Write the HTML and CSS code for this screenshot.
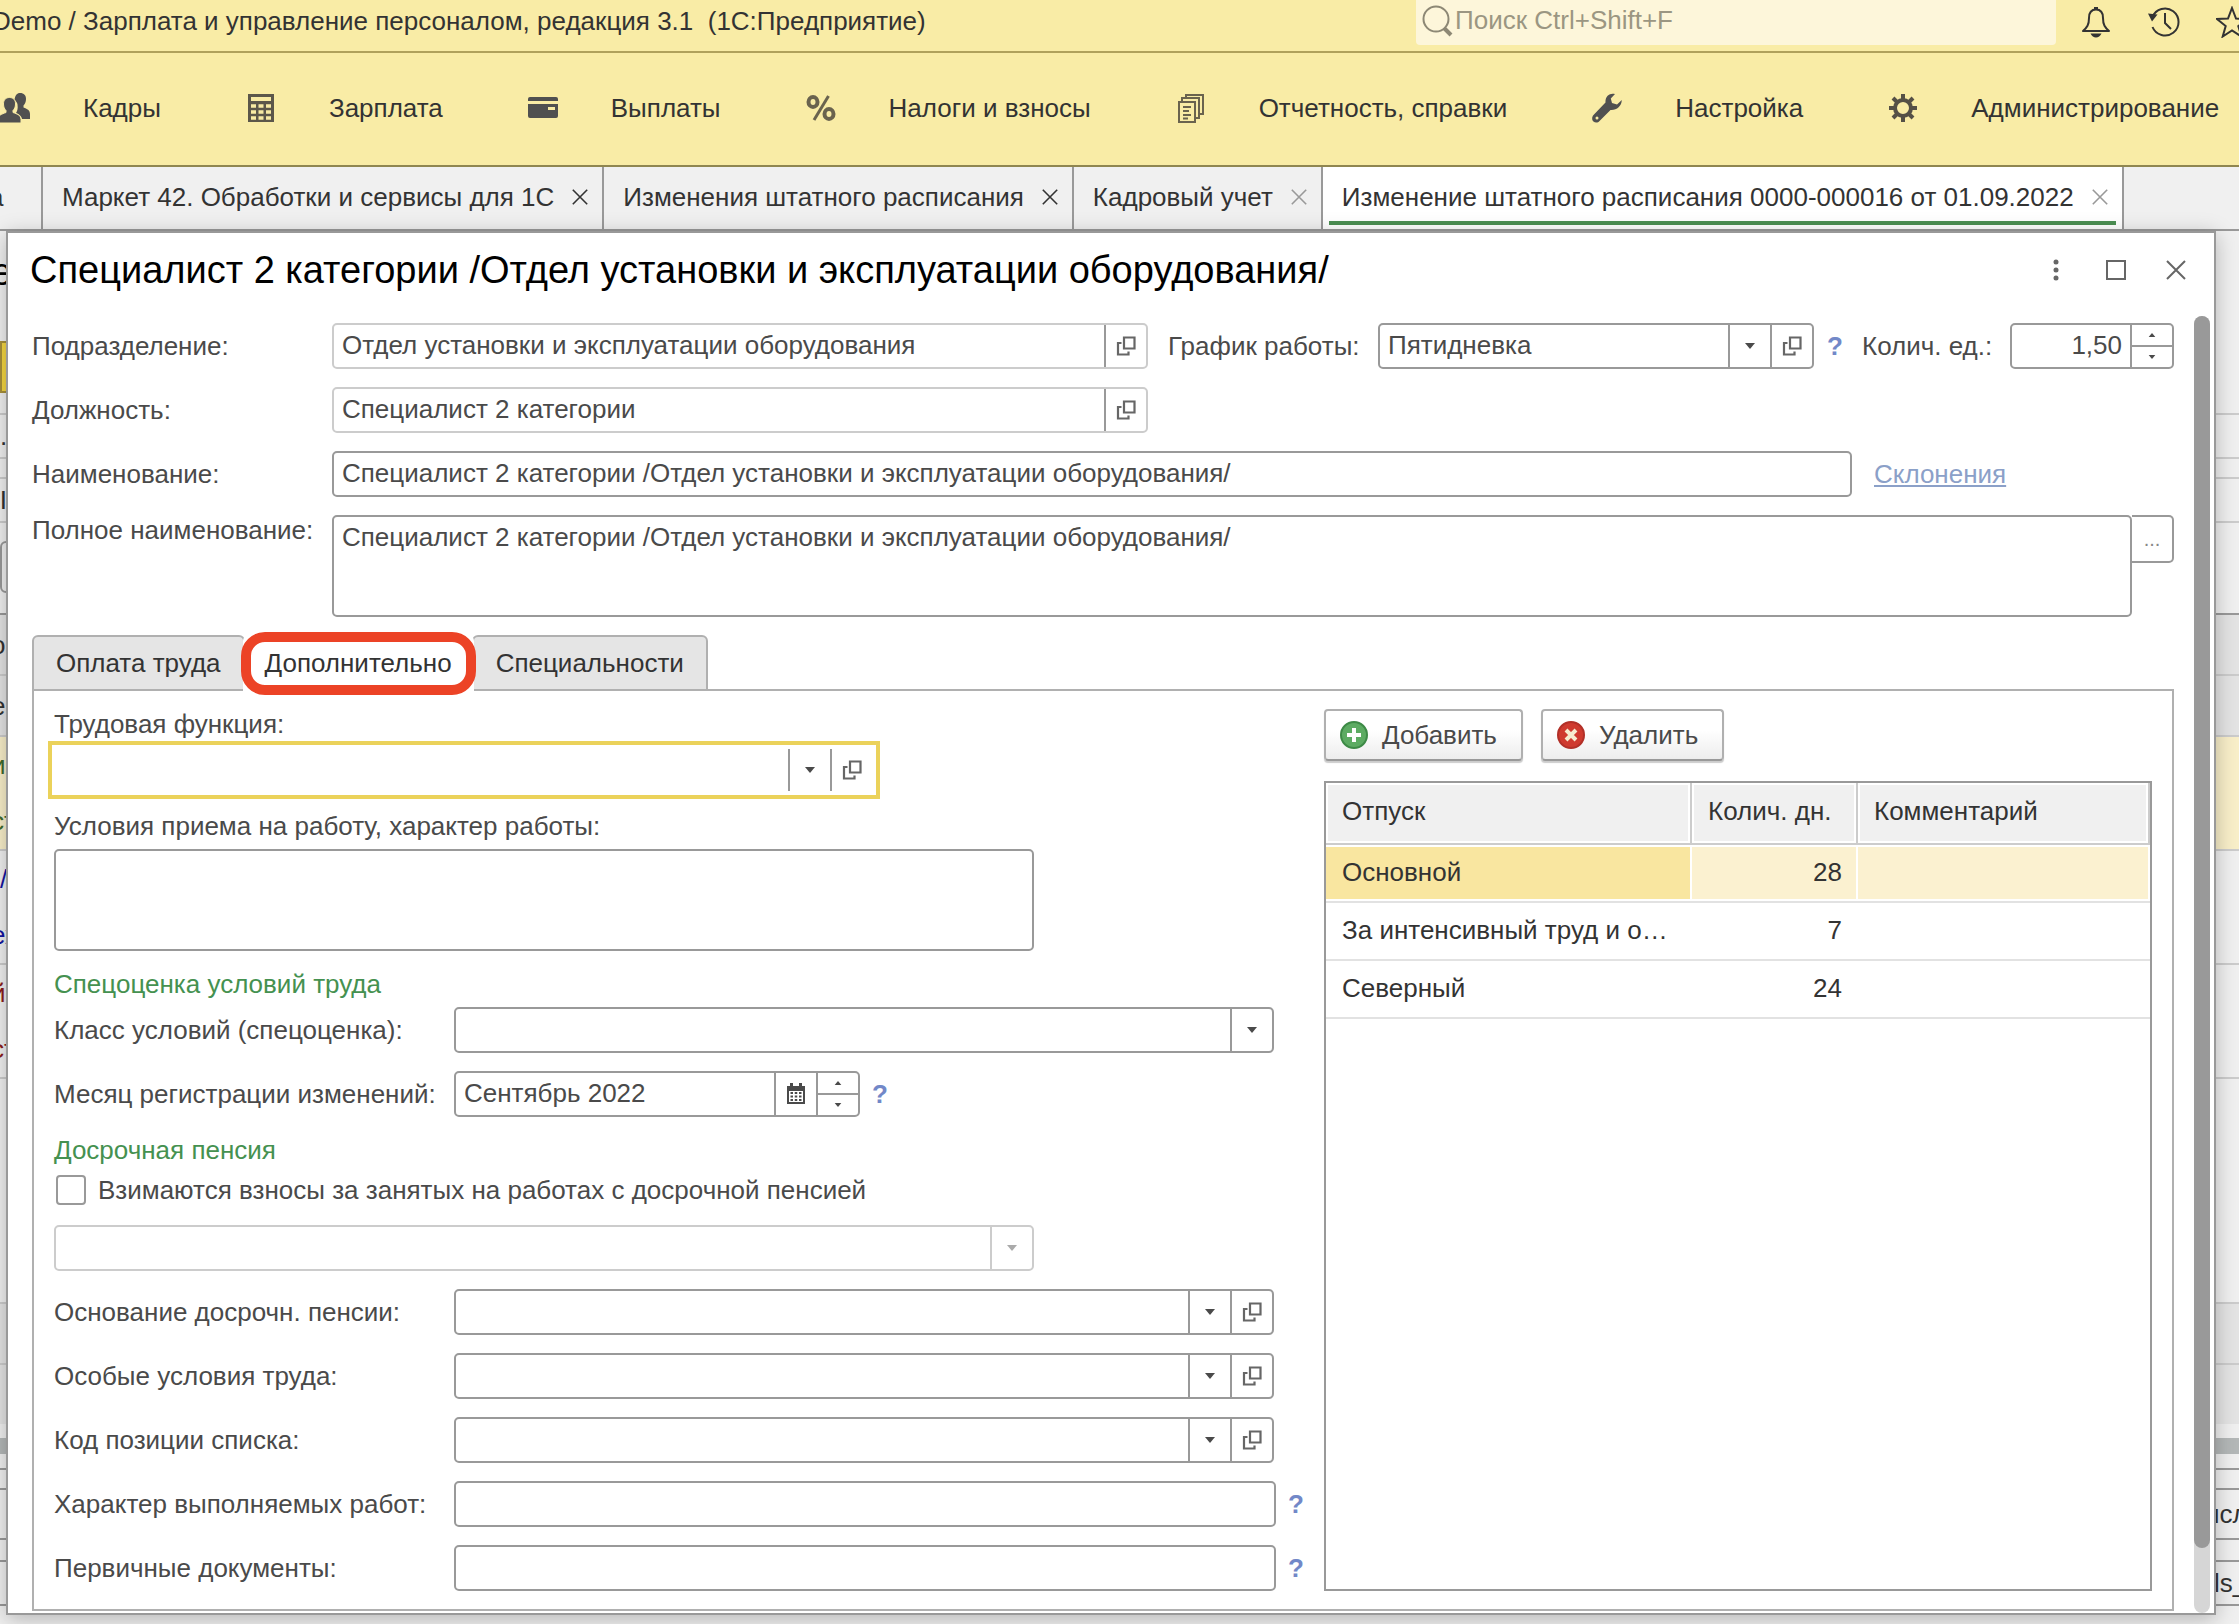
FILE: index.html
```html
<!DOCTYPE html>
<html lang="ru">
<head>
  <meta charset="UTF-8">
  <meta name="viewport" content="width=device-width, initial-scale=1.0">
  <title>Зарплата и управление персоналом</title>
  <link rel="stylesheet" href="styles.css">
</head>
<body>
  <svg class="sprite" aria-hidden="true">
    <symbol id="i-open" viewBox="0 0 20 20">
      <path d="M8 1.5h10.500v11h-10.500z M5.500 7h-3.500v11.500h10.500v-3" fill="none" stroke="currentColor" stroke-width="2.200"/>
    </symbol>
    <symbol id="i-down" viewBox="0 0 12 8"><path d="M1 1h10l-5 6z" fill="currentColor"/></symbol>
    <symbol id="i-up" viewBox="0 0 12 8"><path d="M1 7h10l-5-6z" fill="currentColor"/></symbol>
    <symbol id="i-close" viewBox="0 0 20 20"><path d="M1 1l18 18M19 1L1 19" fill="none" stroke="currentColor" stroke-width="2"/></symbol>
    <symbol id="i-calendar" viewBox="0 0 20 22">
      <path d="M1 3h18v18h-18z" fill="currentColor"/>
      <path d="M4 0h3v4h-3zM13 0h3v4h-3z" fill="currentColor"/>
      <path d="M3 8h14v11h-14z" fill="#fff"/>
      <path d="M4.500 10h11M4.500 13.500h11M4.500 17h11" stroke="currentColor" stroke-width="2" stroke-dasharray="2.500 1.750"/>
    </symbol>
  </svg>

  <header class="topbar">
    <div class="app-title">Demo / Зарплата и управление персоналом, редакция 3.1&nbsp; (1С:Предприятие)</div>
    <label class="search">
      <svg width="32" height="32" viewBox="0 0 32 32"><circle cx="14" cy="14" r="12.500" fill="none" stroke="#8d8875" stroke-width="2"/><path d="M22 23l7 7" stroke="#8d8875" stroke-width="4"/></svg>
      <input type="search" placeholder="Поиск Ctrl+Shift+F" aria-label="Поиск">
    </label>
    <div class="top-actions">
      <button type="button" aria-label="Уведомления">
        <svg width="32" height="32" viewBox="0 0 32 32"><path d="M16 3.500c-5 0-7 4-7 8.500 0 7-2 9.500-6 13h26c-4-3.500-6-6-6-13 0-4.500-2-8.500-7-8.500z" fill="none" stroke="#333" stroke-width="2" stroke-linejoin="round"/><path d="M14 1h4v3h-4zM10.500 27.500h11q-2 4-5.500 4t-5.500-4z" fill="#333"/></svg>
      </button>
      <button type="button" aria-label="История">
        <svg width="32" height="32" viewBox="0 0 32 32"><path d="M4.500 11a13.500 13.500 0 1 1 0 10" fill="none" stroke="#333" stroke-width="2"/><path d="M0 7.500l9.500 1-5.500 7z" fill="#333"/><path d="M17 7v10l6 6" fill="none" stroke="#333" stroke-width="2"/></svg>
      </button>
      <button type="button" aria-label="Избранное">
        <svg width="32" height="32" viewBox="0 0 32 32"><path d="M16 2l4 10.500 11 .5-8.700 7 3 10.500-9.300-6-9.300 6 3-10.500-8.700-7 11-.5z" fill="none" stroke="#333" stroke-width="2"/></svg>
      </button>
    </div>
  </header>

  <nav class="sections">
    <a href="#">
      <svg viewBox="0 0 30 30" fill="#505050"><path d="M20 0c4 0 6 2.500 6 6 0 3-1 5-2.500 6.500v2c3.500 1.500 6.500 2.500 6.500 6.500v5h-8c-.5-3-3-5-6-6 1.500-2.500 2-4.500 1.500-8.500-.3-2-1.500-3.500-3-4.500.5-4.500 2.500-7 5.500-7z"/><path d="M9.500 4.500c4 0 6 2.500 6 6.500 0 3-1 5-2.500 6.500v2c4 1.500 8 2.500 8 7v3.500H-2v-3.500c0-4.500 4-5.500 8-7v-2C4.500 16 3.500 14 3.500 11c0-4 2-6.500 6-6.500z" stroke="#f8eba4" stroke-width="1"/></svg>
      Кадры
    </a>
    <a href="#">
      <svg viewBox="0 0 30 30"><path d="M2 1h26v28h-26z" fill="#5c574a"/><path d="M5 4h20v4h-20z" fill="#f8eba4"/><path d="M5 13h20M5 19h20M5 25h20" stroke="#f8eba4" stroke-width="3.500" stroke-dasharray="5 2.500"/></svg>
      Зарплата
    </a>
    <a href="#">
      <svg viewBox="0 0 30 30" fill="#505050"><path d="M2 4h26q2 0 2 2v2H0V6q0-2 2-2zM0 11h30v12q0 2-2 2H2q-2 0-2-2z"/><path d="M20 14h7v3h-7z" fill="#f8eba4"/></svg>
      Выплаты
    </a>
    <a href="#">
      <svg viewBox="0 0 30 30" fill="none" stroke="#6a634e" stroke-width="4"><ellipse cx="7" cy="9" rx="4.500" ry="5"/><ellipse cx="23" cy="21" rx="4.500" ry="5"/><path d="M22.500 3L8 27" stroke-width="3"/></svg>
      Налоги и взносы
    </a>
    <a href="#">
      <svg viewBox="0 0 30 30" fill="none" stroke="#6a634e" stroke-width="2"><path d="M3 9h16v20H3zM6 9V5h17v20h-4M10 5V2h17v19h-4"/><path d="M7 14h8M7 18h6M7 22h8M7 25.500h5"/></svg>
      Отчетность, справки
    </a>
    <a href="#">
      <svg viewBox="0 0 30 30"><path d="M23 1c-5-1.500-10 2-9.500 8.500L1.500 22c-2 2.500-1.500 5 0 6.500s4.500 1.500 6-.5L18.500 17c6 .5 11-3.500 11.300-10L25 11.500l-5-1.500-1.200-4.500z" fill="#505050"/><circle cx="5" cy="25" r="1.500" fill="#f8eba4"/></svg>
      Настройка
    </a>
    <a href="#">
      <svg viewBox="0 0 30 30" fill="none" stroke="#555046"><circle cx="15" cy="15" r="8" stroke-width="4"/><path d="M15 1v6M15 23v6M1 15h6M23 15h6M5 5l4.500 4.500M20.500 20.500L25 25M25 5l-4.500 4.500M9.500 20.500L5 25" stroke-width="4"/></svg>
      Администрирование
    </a>
  </nav>

  <div class="windows">
    <div class="window-tab first"><a href="#">а</a></div>
    <div class="window-tab"><a href="#">Маркет 42. Обработки и сервисы для 1С</a><button type="button" aria-label="Закрыть"><svg><use href="#i-close"/></svg></button></div>
    <div class="window-tab"><a href="#">Изменения штатного расписания</a><button type="button" aria-label="Закрыть"><svg><use href="#i-close"/></svg></button></div>
    <div class="window-tab"><a href="#">Кадровый учет</a><button type="button" class="pale" aria-label="Закрыть"><svg><use href="#i-close"/></svg></button></div>
    <div class="window-tab current"><a href="#">Изменение штатного расписания 0000-000016 от 01.09.2022</a><button type="button" class="pale" aria-label="Закрыть"><svg><use href="#i-close"/></svg></button></div>
  </div>

  <main class="workspace">
    <!-- document under the dialog, only its edges are visible -->
    <div class="doc" aria-hidden="true">
      <div class="strip heading"><span>е</span></div>
      <div class="strip command"></div>
      <div class="strip h20"></div>
      <div class="strip h44 line"><span class="dot">.</span></div>
      <div class="strip h20 line"></div>
      <div class="strip h44 line"><span>-I</span></div>
      <div class="strip h20 line"></div>
      <div class="strip button-row"></div>
      <div class="strip h20"></div>
      <div class="strip head dark"><span>о</span></div>
      <div class="strip head line"><span>е</span></div>
      <div class="strip row selected line"><span class="green">и</span></div>
      <div class="strip row selected"><span class="green">ст</span></div>
      <div class="strip row line"><span class="blue slash">/</span></div>
      <div class="strip row"><span class="blue">ех</span></div>
      <div class="strip row line"><span class="red">й</span></div>
      <div class="strip row"><span class="red">ст</span></div>
      <div class="strip empty line"></div>
      <div class="strip head line"></div>
      <div class="strip head line"></div>
      <div class="strip track"></div>
      <div class="strip h20 dark"></div>
      <div class="strip foot-button"><span></span><span class="edge">исл</span></div>
      <div class="strip h20"></div>
      <div class="strip foot-input"><span></span><span class="edge">ls_</span></div>
      <div class="strip rest"></div>
    </div>

    <section class="dialog" role="dialog" aria-labelledby="dialog-title">
      <div class="dialog-head">
        <h1 id="dialog-title">Специалист 2 категории /Отдел установки и эксплуатации оборудования/</h1>
        <div class="dialog-actions">
          <button type="button" aria-label="Еще"><svg viewBox="0 0 20 22"><circle cx="10" cy="3" r="2.500" fill="#666"/><circle cx="10" cy="11" r="2.500" fill="#666"/><circle cx="10" cy="19" r="2.500" fill="#666"/></svg></button>
          <button type="button" aria-label="Развернуть"><svg viewBox="0 0 20 20"><path d="M1 1h18v18h-18z" fill="none" stroke="#666" stroke-width="2"/></svg></button>
          <button type="button" aria-label="Закрыть"><svg><use href="#i-close"/></svg></button>
        </div>
      </div>

      <div class="dialog-body">
        <form class="form">
          <div class="rows">
            <div class="main-row">
              <label for="dept">Подразделение:</label>
              <div class="field readonly">
                <input id="dept" type="text" value="Отдел установки и эксплуатации оборудования" readonly>
                <button type="button" aria-label="Открыть"><svg class="open"><use href="#i-open"/></svg></button>
              </div>
              <div class="side">
                <label class="schedule-label" for="schedule">График работы:</label>
                <div class="field schedule">
                  <select id="schedule"><option>Пятидневка</option></select>
                  <span class="part"><svg class="arrow"><use href="#i-down"/></svg></span>
                  <button type="button" aria-label="Открыть"><svg class="open"><use href="#i-open"/></svg></button>
                </div>
                <button type="button" class="help">?</button>
                <label class="count-label" for="count">Колич. ед.:</label>
                <div class="field count">
                  <input id="count" class="num" type="text" value="1,50">
                  <div class="spin">
                    <button type="button" aria-label="Больше"><svg><use href="#i-up"/></svg></button>
                    <button type="button" aria-label="Меньше"><svg><use href="#i-down"/></svg></button>
                  </div>
                </div>
              </div>
            </div>
            <div class="main-row">
              <label for="post">Должность:</label>
              <div class="field readonly">
                <input id="post" type="text" value="Специалист 2 категории" readonly>
                <button type="button" aria-label="Открыть"><svg class="open"><use href="#i-open"/></svg></button>
              </div>
            </div>
            <div class="name-row">
              <label for="name">Наименование:</label>
              <div class="field"><input id="name" type="text" value="Специалист 2 категории /Отдел установки и эксплуатации оборудования/"></div>
              <a href="#">Склонения</a>
            </div>
            <div class="full-row">
              <label for="fullname">Полное наименование:</label>
              <textarea id="fullname">Специалист 2 категории /Отдел установки и эксплуатации оборудования/</textarea>
              <button type="button" class="more" aria-label="Изменить">...</button>
            </div>
          </div>

          <div class="tabs" role="tablist">
            <button type="button" role="tab">Оплата труда</button>
            <button type="button" role="tab" class="active" aria-selected="true">Дополнительно</button>
            <button type="button" role="tab">Специальности</button>
          </div>

          <div class="panel">
            <div class="left">
              <label class="caption" for="func">Трудовая функция:</label>
              <div class="field focused">
                <select id="func"><option></option></select>
                <span class="part"><svg class="arrow"><use href="#i-down"/></svg></span>
                <button type="button" aria-label="Открыть"><svg class="open"><use href="#i-open"/></svg></button>
              </div>
              <label class="caption terms" for="terms">Условия приема на работу, характер работы:</label>
              <textarea id="terms"></textarea>

              <h2>Спецоценка условий труда</h2>
              <div class="rows after-title">
                <div class="row-line">
                  <label for="class">Класс условий (спецоценка):</label>
                  <div class="field">
                    <select id="class"><option></option></select>
                    <span class="part"><svg class="arrow"><use href="#i-down"/></svg></span>
                  </div>
                </div>
                <div class="row-line">
                  <label for="month">Месяц регистрации изменений:</label>
                  <div class="field month">
                    <input id="month" type="text" value="Сентябрь 2022">
                    <button type="button" aria-label="Календарь"><svg class="calendar"><use href="#i-calendar"/></svg></button>
                    <div class="spin">
                      <button type="button" aria-label="Вперед"><svg><use href="#i-up"/></svg></button>
                      <button type="button" aria-label="Назад"><svg><use href="#i-down"/></svg></button>
                    </div>
                  </div>
                  <button type="button" class="help">?</button>
                </div>
              </div>

              <h2>Досрочная пенсия</h2>
              <label class="check"><input type="checkbox">Взимаются взносы за занятых на работах с досрочной пенсией</label>
              <div class="rows pension">
                <div class="field disabled">
                  <select disabled aria-label="Вид досрочной пенсии"><option></option></select>
                  <span class="part"><svg class="arrow"><use href="#i-down"/></svg></span>
                </div>
                <div class="row-line">
                  <label for="basis">Основание досрочн. пенсии:</label>
                  <div class="field">
                    <select id="basis"><option></option></select>
                    <span class="part"><svg class="arrow"><use href="#i-down"/></svg></span>
                    <button type="button" aria-label="Открыть"><svg class="open"><use href="#i-open"/></svg></button>
                  </div>
                </div>
                <div class="row-line">
                  <label for="special">Особые условия труда:</label>
                  <div class="field">
                    <select id="special"><option></option></select>
                    <span class="part"><svg class="arrow"><use href="#i-down"/></svg></span>
                    <button type="button" aria-label="Открыть"><svg class="open"><use href="#i-open"/></svg></button>
                  </div>
                </div>
                <div class="row-line">
                  <label for="code">Код позиции списка:</label>
                  <div class="field">
                    <select id="code"><option></option></select>
                    <span class="part"><svg class="arrow"><use href="#i-down"/></svg></span>
                    <button type="button" aria-label="Открыть"><svg class="open"><use href="#i-open"/></svg></button>
                  </div>
                </div>
                <div class="row-line plain">
                  <label for="nature">Характер выполняемых работ:</label>
                  <div class="field"><input id="nature" type="text"></div>
                  <button type="button" class="help">?</button>
                </div>
                <div class="row-line plain">
                  <label for="docs">Первичные документы:</label>
                  <div class="field"><input id="docs" type="text"></div>
                  <button type="button" class="help">?</button>
                </div>
              </div>
            </div>

            <div class="right">
              <div class="toolbar">
                <button type="button">
                  <svg viewBox="0 0 28 28"><circle cx="14" cy="14" r="13" fill="#5cab62" stroke="#3d8a46" stroke-width="2"/><path d="M14 7v14M7 14h14" stroke="#fff" stroke-width="4"/></svg>
                  Добавить
                </button>
                <button type="button">
                  <svg viewBox="0 0 28 28"><circle cx="14" cy="14" r="13" fill="#cf3a2f" stroke="#b23028" stroke-width="2"/><path d="M9 9l10 10M19 9L9 19" stroke="#f6ecd0" stroke-width="4"/></svg>
                  Удалить
                </button>
              </div>
              <div class="grid">
                <table>
                  <thead>
                    <tr><th class="c-name">Отпуск</th><th class="c-days">Колич. дн.</th><th>Комментарий</th></tr>
                  </thead>
                  <tbody>
                    <tr class="selected"><td>Основной</td><td>28</td><td></td></tr>
                    <tr><td>За интенсивный труд и о…</td><td>7</td><td></td></tr>
                    <tr><td>Северный</td><td>24</td><td></td></tr>
                  </tbody>
                </table>
              </div>
            </div>
          </div>
        </form>
        <div class="scrollbar"><div class="thumb"></div></div>
      </div>
    </section>
  </main>
</body>
</html>
```
FILE: styles.css
```css
* {
  box-sizing: border-box;
}
body {
  margin: 0;
  min-height: 100vh;
  display: flex;
  flex-direction: column;
  overflow: hidden;
  background: #f0f0f0;
  color: #333;
  font-family: "Liberation Sans", Arial, sans-serif;
  font-size: 26px;
  line-height: 30px;
}
button, input, select, textarea {
  font: inherit;
  color: inherit;
  margin: 0;
  padding: 0;
  border: 0;
  background: none;
}
button {
  display: flex;
  align-items: center;
  justify-content: center;
}
a {
  color: inherit;
  text-decoration: none;
}
.sprite {
  display: none;
}

/* top */
.topbar {
  display: flex;
  align-items: flex-start;
  height: 53px;
  background: #f9eca6;
  border-bottom: 2px solid #b0a15c;
}
.app-title {
  flex: 1;
  margin-left: -8px;
  padding-top: 6px;
  white-space: pre;
}
.search {
  display: flex;
  align-items: center;
  width: 640px;
  height: 45px;
  padding: 0 6px 4px;
  background: #fdf6da;
  border-radius: 0 0 4px 4px;
}
.search input {
  flex: 1;
  padding: 0 0 2px 1px;
  outline: 0;
}
.search input::placeholder {
  color: #9b9682;
  opacity: 1;
}
.top-actions {
  display: flex;
  gap: 36px;
  width: 183px;
  padding: 6px 0 0 24px;
}
.top-actions button {
  flex: none;
}
.sections {
  display: flex;
  align-items: center;
  gap: 85px;
  height: 114px;
  padding-bottom: 2px;
  background: #f9eca6;
  border-bottom: 2px solid #8f8650;
  white-space: nowrap;
}
.sections a {
  display: flex;
  align-items: center;
  gap: 53px;
}
.sections svg {
  width: 30px;
  height: 30px;
}
.windows {
  display: flex;
  height: 64px;
  border-bottom: 2px solid #999;
  white-space: nowrap;
}
.window-tab {
  display: flex;
  align-items: center;
  gap: 18px;
  padding: 0 14px 2px 19px;
  border-right: 2px solid #999;
}
.window-tab.first {
  width: 43px;
  padding-left: 0;
  text-indent: -11px;
}
.window-tab svg {
  width: 16px;
  height: 16px;
}
.window-tab .pale {
  color: #999;
}
.window-tab.current {
  background: linear-gradient(#4c8f53, #4c8f53) center 54px / calc(100% - 12px) 4px no-repeat #fff;
}

/* document behind the dialog */
.workspace {
  position: relative;
  flex: 1;
  display: flex;
  flex-direction: column;
}
.doc {
  flex: 1;
  display: flex;
  flex-direction: column;
}
.strip {
  display: flex;
  align-items: center;
  justify-content: space-between;
}
.strip span {
  margin-left: -9px;
}
.strip .dot, .strip .slash {
  margin-left: 0;
}
.strip .edge {
  width: 34px;
  overflow: hidden;
}
.line {
  border-top: 2px solid #ccc;
}
.dark {
  border-top: 2px solid #999;
}
.heading {
  height: 110px;
  padding-bottom: 28px;
  font-size: 38px;
  color: #000;
}
.command {
  width: 50%;
  height: 52px;
  background: #f5d742;
  border: 2px solid #a8903a;
}
.h20 {
  height: 20px;
}
.h44 {
  height: 44px;
}
.button-row {
  width: 50%;
  height: 52px;
  border: 2px solid #999;
  border-radius: 6px;
}
.head {
  height: 61px;
  background: #e4e4e4;
}
.row {
  height: 57px;
}
.row.selected {
  background: #f9efc9;
}
.green {
  color: #3f6b2c;
}
.blue {
  color: #1414a0;
}
.red {
  color: #8c1c1c;
}
.empty {
  height: 225px;
}
.track {
  height: 44px;
  background: linear-gradient(#b4b8b8, #b4b8b8) center / 100% 16px no-repeat;
}
.foot-button, .foot-input {
  height: 52px;
  border: solid #999;
  border-width: 2px 0;
}
.foot-input {
  height: 46px;
}
.foot-input .edge {
  width: 25px;
}

/* dialog */
.dialog {
  position: absolute;
  top: 0;
  left: 6px;
  right: 23px;
  background: #fff;
  border: 2px solid #999;
  box-shadow: 0 4px 20px rgba(0, 0, 0, 0.25);
  color: #4a4a4a;
}
.dialog-head {
  display: flex;
  justify-content: space-between;
  align-items: center;
  height: 83px;
  padding: 0 28px 9px 22px;
}
h1 {
  margin: 0;
  font-size: 38px;
  line-height: 44px;
  font-weight: normal;
  color: #000;
}
.dialog-actions {
  display: flex;
  gap: 40px;
  color: #666;
}
.dialog-actions svg {
  width: 20px;
  height: 22px;
}
.dialog-body {
  display: flex;
  gap: 20px;
  padding: 0 4px 0 24px;
}
.form {
  flex: 1;
  padding: 7px 0 2px;
}
.scrollbar {
  width: 16px;
  background: #d6d6d6;
  border-radius: 8px;
}
.thumb {
  height: 95%;
  background: #999;
  border-radius: 8px;
}
.rows {
  display: flex;
  flex-direction: column;
  gap: 18px;
}

/* fields */
.field {
  display: flex;
  height: 46px;
  border: 2px solid #999;
  border-radius: 5px;
  background: #fff;
}
.field input, .field select {
  flex: 1;
  min-width: 0;
  padding: 0 8px 2px;
  appearance: none;
  outline: 0;
}
.field .num {
  text-align: right;
}
.field > button, .field > .part, .spin {
  display: flex;
  align-items: center;
  justify-content: center;
  width: 42px;
  border-left: 2px solid #999;
  pointer-events: none;
}
.field.readonly, .field.disabled {
  border-color: #ccc;
}
.field.disabled .part {
  border-color: #ccc;
  color: #aaa;
}
.open {
  width: 20px;
  height: 20px;
  color: #666;
}
.arrow {
  width: 12px;
  height: 8px;
}
.calendar {
  width: 20px;
  height: 22px;
}
.field .spin {
  flex-direction: column;
  align-items: stretch;
}
.spin button {
  flex: 1;
}
.spin button + button {
  border-top: 2px solid #999;
}
.spin svg {
  width: 8px;
  height: 6px;
}
textarea {
  display: block;
  height: 102px;
  padding: 5px 8px;
  border: 2px solid #999;
  border-radius: 5px;
  resize: none;
  outline: 0;
}
.help {
  width: 40px;
  color: #7288c8;
  font-weight: bold;
}
.main-row {
  display: grid;
  grid-template-columns: 300px 1fr 1026px;
  align-items: center;
}
.side {
  display: flex;
  align-items: center;
  padding-left: 20px;
}
.side > * {
  flex: none;
}
.schedule-label {
  width: 210px;
}
.schedule {
  width: 436px;
}
.side .help {
  width: 48px;
  padding-right: 6px;
}
.count-label {
  width: 148px;
}
.side .count {
  flex: 1;
  min-width: 0;
}
.name-row {
  display: grid;
  grid-template-columns: 300px 1fr 300px;
  align-items: center;
}
.name-row a {
  justify-self: start;
  color: #8ba0c8;
  text-decoration: underline;
}
.name-row .field {
  margin-right: 22px;
}
.full-row {
  display: grid;
  grid-template-columns: 300px 1fr 42px;
  align-items: start;
}
.more {
  height: 48px;
  border: 2px solid #999;
  border-left: 0;
  border-radius: 0 5px 5px 0;
  color: #888;
  font-size: 20px;
}

/* form tabs */
.tabs {
  display: flex;
  margin-top: 18px;
}
.tabs button {
  height: 56px;
  padding: 0 22px;
  background: #e5e5e5;
  border: 2px solid #b0b0b0;
  border-radius: 6px 6px 0 0;
  color: #333;
}
.tabs button + button {
  margin-left: -2px;
}
.tabs .active {
  position: relative;
  padding: 0 20px;
  background: #fff;
  border-color: #fff;
}
.tabs .active::after {
  content: "";
  position: absolute;
  inset: -5px -4px -6px;
  border: 10px solid #ec4326;
  border-radius: 24px;
}
.panel {
  display: grid;
  grid-template-columns: minmax(0, 1270fr) 828fr;
  margin-top: -2px;
  padding: 18px 20px;
  border: 2px solid #b0b0b0;
}
.caption {
  display: block;
}
.focused {
  width: 832px;
  height: 58px;
  margin: 2px 0 12px -6px;
  padding: 4px;
  border: 4px solid #ebd25a;
  border-radius: 0;
}
.terms {
  margin-bottom: 8px;
}
#terms, .disabled {
  width: 980px;
}
h2 {
  margin: 18px 0 0;
  font-size: 26px;
  line-height: 30px;
  font-weight: normal;
  color: #459150;
}
.after-title {
  margin-top: 8px;
}
.row-line {
  display: flex;
  align-items: center;
}
.row-line label {
  width: 400px;
}
.row-line .field {
  width: 820px;
}
.row-line.plain .field {
  width: 822px;
}
.row-line .month {
  width: 406px;
}
.check {
  display: flex;
  align-items: center;
  gap: 12px;
  margin-top: 10px;
}
.check input {
  appearance: none;
  width: 30px;
  height: 30px;
  margin-left: 2px;
  border: 2px solid #999;
  border-radius: 4px;
}
.pension {
  margin-top: 20px;
}

/* vacations */
.right {
  display: flex;
  flex-direction: column;
  gap: 20px;
}
.toolbar {
  display: flex;
  gap: 18px;
}
.toolbar button {
  gap: 14px;
  height: 52px;
  padding: 0 24px 0 14px;
  border: 2px solid #b0b0b0;
  border-bottom-color: #999;
  border-radius: 4px;
  background: linear-gradient(#fff 40%, #ededed);
  box-shadow: 0 2px 1px #ccc;
}
.toolbar svg {
  width: 28px;
  height: 28px;
}
.grid {
  flex: 1;
  border: 2px solid #999;
  color: #333;
}
table {
  width: 100%;
  table-layout: fixed;
  border-collapse: separate;
  border-spacing: 0;
}
th {
  height: 62px;
  padding: 0 16px 4px;
  text-align: left;
  font-weight: normal;
  background: #f0f0f0;
  border: solid #ccc;
  border-width: 0 2px 2px 0;
  box-shadow: inset 0 0 0 2px #fff;
}
.c-name {
  width: 366px;
}
.c-days {
  width: 166px;
}
td {
  height: 58px;
  padding: 0 16px 2px;
  border-bottom: 2px solid #e2e2e2;
  white-space: nowrap;
}
td:nth-child(2) {
  text-align: right;
}
.selected td {
  background: #fbf1d0;
  box-shadow: inset -2px 2px #fff, inset 0 -2px #fff;
}
.selected td:first-child {
  background: #f9e6a0;
}
```
